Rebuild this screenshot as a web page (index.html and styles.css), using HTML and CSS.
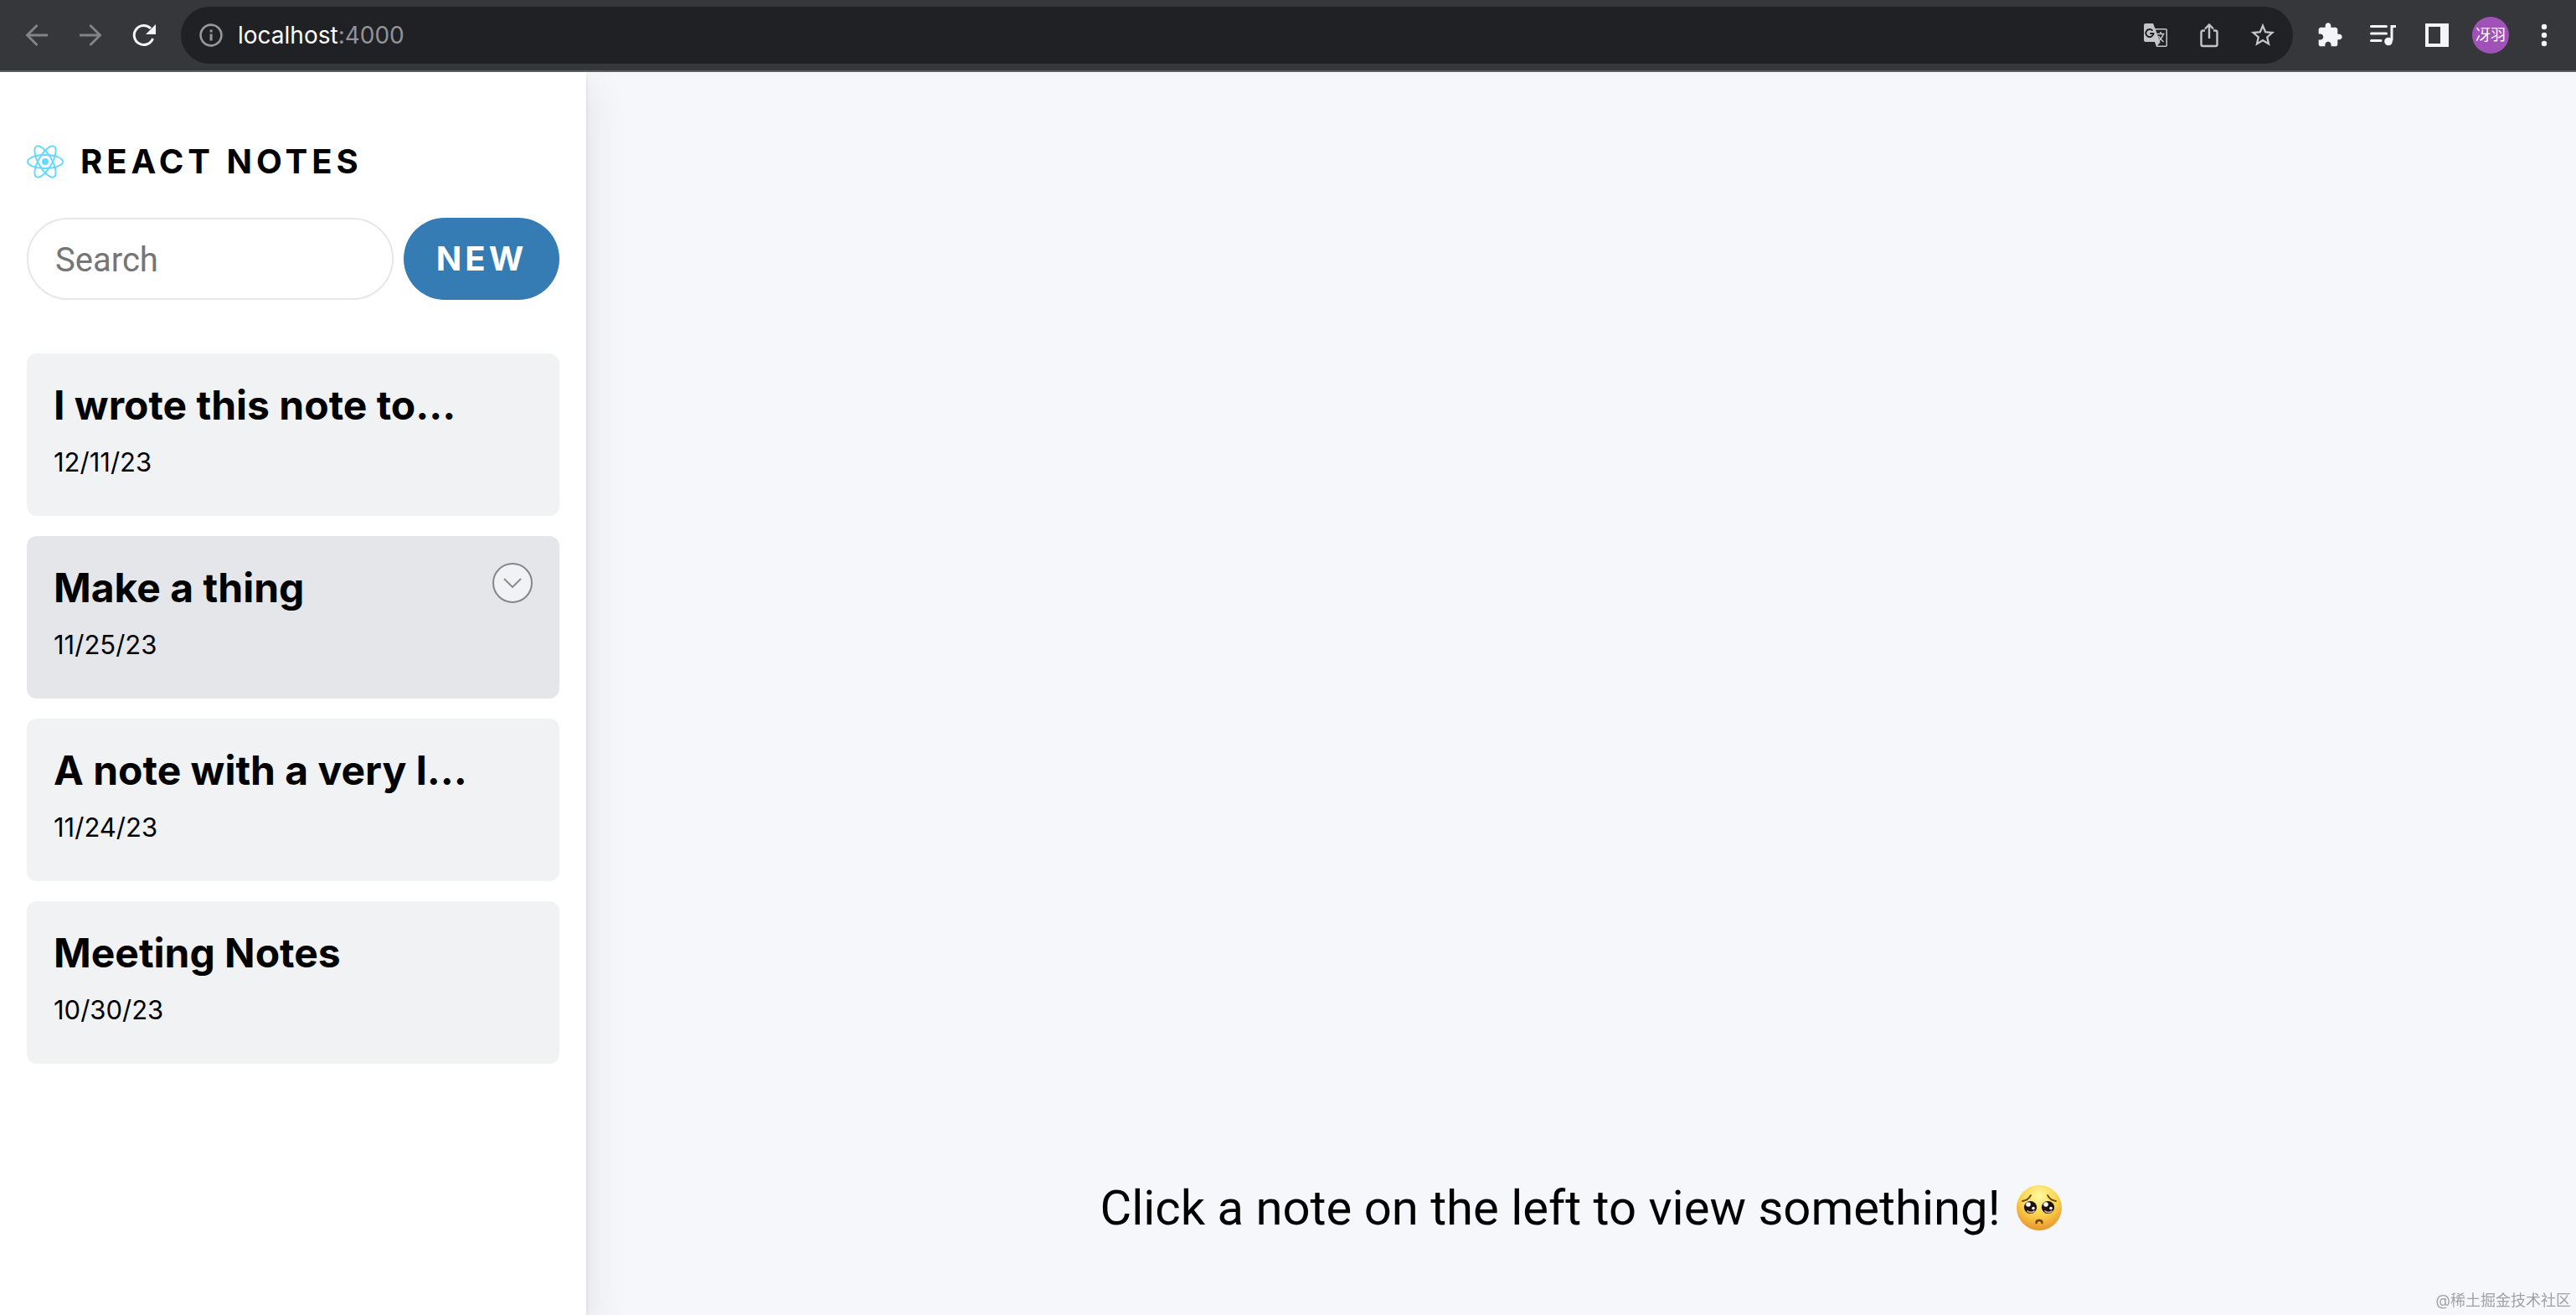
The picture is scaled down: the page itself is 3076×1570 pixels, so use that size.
FILE: index.html
```html
<!DOCTYPE html>
<html lang="en">
<head>
<meta charset="utf-8">
<title>React Notes</title>
<link rel="stylesheet" href="styles.css">
</head>
<body>
<header class="toolbar">
  <nav class="toolbar-group" aria-label="Browser">
    <button class="tool dim" aria-label="Back"><svg width="28" height="28" viewBox="0 0 28 28" fill="none" stroke="currentColor" stroke-width="3"><path d="M27 14H3M14.500 2 2.500 14l12 12"/></svg></button>
    <button class="tool dim" aria-label="Forward"><svg width="28" height="28" viewBox="0 0 28 28" fill="none" stroke="currentColor" stroke-width="3"><path d="M1 14h24M13.500 2l12 12-12 12"/></svg></button>
    <button class="tool bright" aria-label="Reload"><svg width="28" height="28" viewBox="0 0 28 28"><path d="M24.500 18A11.500 11.500 0 1 1 22 6" fill="none" stroke="currentColor" stroke-width="3"/><path d="M28 1v12H16z" fill="currentColor"/></svg></button>
  </nav>
  <div class="address">
    <button class="tool info" aria-label="Site information"><svg width="28" height="28" viewBox="0 0 28 28"><circle cx="14" cy="14" r="12.400" fill="none" stroke="currentColor" stroke-width="2.600"/><path d="M12.600 7.500h3v3h-3zM12.600 12.500h3v8h-3z" fill="currentColor"/></svg></button>
    <p class="url">localhost<span class="port">:4000</span></p>
    <button class="tool soft" aria-label="Translate"><svg width="28" height="28" viewBox="0 0 28 28"><path d="M2 0h9l2.400 6H26a2 2 0 0 1 2 2v18a2 2 0 0 1-2 2H15l-2-6H2a2 2 0 0 1-2-2V2a2 2 0 0 1 2-2z" fill="currentColor"/><path d="M14 7.500h12.500v19H16l3.500-4z" fill="#202124"/><path d="M10.500 8.600A4.600 4.600 0 1 0 11.500 12H7.200" fill="none" stroke="#202124" stroke-width="2"/><path d="M15.500 12.500h9M20 10v2.500M23 13c-1 3.500-3 6-6 8M17.500 15c1.500 3 3.500 5 6 7" fill="none" stroke="currentColor" stroke-width="1.600"/></svg></button>
    <button class="tool soft" aria-label="Share"><svg width="28" height="30" viewBox="0 0 28 30" fill="none" stroke="currentColor" stroke-width="2.400"><path d="M9 9.500H6.500a2 2 0 0 0-2 2V26a2 2 0 0 0 2 2h15a2 2 0 0 0 2-2V11.500a2 2 0 0 0-2-2H19M14 19V3M9 7.500l5-5 5 5"/></svg></button>
    <button class="tool soft" aria-label="Bookmark"><svg width="34" height="34" viewBox="0 0 24 24" fill="currentColor"><path d="M22 9.240l-7.190-.62L12 2 9.190 8.630 2 9.240l5.460 4.730L5.820 21 12 17.270 18.180 21l-1.630-7.030L22 9.240zM12 15.400l-3.760 2.270 1-4.280-3.320-2.880 4.380-.38L12 6.100l1.710 4.040 4.380.38-3.320 2.880 1 4.280L12 15.400z"/></svg></button>
  </div>
  <div class="toolbar-group">
    <button class="tool bright" aria-label="Extensions"><svg width="32" height="32" viewBox="0 0 24 24" fill="currentColor"><path d="M20.500 11H19V7c0-1.100-.9-2-2-2h-4V3.500C13 2.120 11.880 1 10.500 1S8 2.120 8 3.500V5H4c-1.100 0-1.990.9-1.990 2v3.800H3.500c1.490 0 2.700 1.210 2.700 2.700s-1.210 2.700-2.700 2.700H2V20c0 1.100.9 2 2 2h3.800v-1.500c0-1.490 1.210-2.700 2.700-2.700 1.490 0 2.700 1.210 2.700 2.700V22H17c1.100 0 2-.9 2-2v-4h1.500c1.380 0 2.500-1.120 2.500-2.500S21.880 11 20.500 11z"/></svg></button>
    <button class="tool bright" aria-label="Media controls"><svg width="32" height="28" viewBox="0 0 32 28" fill="none" stroke="currentColor" stroke-width="3" stroke-linecap="round"><path d="M1.500 3.500h18M1.500 12h18M1.500 20.500H13"/><path d="M31 3.500h-5v17" stroke-linecap="butt"/><circle cx="22" cy="21.500" r="4.800" fill="currentColor" stroke="none"/></svg></button>
    <button class="tool bright" aria-label="Side panel"><svg width="28" height="28" viewBox="0 0 28 28" fill="currentColor"><path fill-rule="evenodd" d="M0 0h28v28H0zM4 4v20h14V4z"/></svg></button>
    <button class="tool" aria-label="Profile"><span class="avatar">冴羽</span></button>
    <button class="tool bright" aria-label="Menu"><svg width="28" height="28" viewBox="0 0 28 28" fill="currentColor"><circle cx="14" cy="4" r="3.200"/><circle cx="14" cy="14" r="3.200"/><circle cx="14" cy="24" r="3.200"/></svg></button>
  </div>
</header>
<div class="app">
  <aside class="sidebar">
    <h1 class="brand">
      <svg width="44" height="40" viewBox="-11.500 -10.232 23 20.463" aria-hidden="true"><circle r="2.050" fill="#61dafb"/><g fill="none" stroke="#61dafb"><ellipse rx="11" ry="4.200"/><ellipse rx="11" ry="4.200" transform="rotate(60)"/><ellipse rx="11" ry="4.200" transform="rotate(120)"/></g></svg>
      React Notes
    </h1>
    <div class="actions">
      <input class="search" type="search" placeholder="Search" aria-label="Search notes">
      <button class="new">New</button>
    </div>
    <ul class="notes">
      <li class="note"><h2 class="note-title">I wrote this note to...</h2><p class="note-date">12/11/23</p></li>
      <li class="note active"><h2 class="note-title">Make a thing</h2><p class="note-date">11/25/23</p><button class="expand" aria-label="Expand note"><svg width="24" height="14" viewBox="0 0 24 14" fill="none" stroke="currentColor" stroke-width="1.800"><path d="M2 2l10 10L22 2"/></svg></button></li>
      <li class="note"><h2 class="note-title">A note with a very l...</h2><p class="note-date">11/24/23</p></li>
      <li class="note"><h2 class="note-title">Meeting Notes</h2><p class="note-date">10/30/23</p></li>
    </ul>
  </aside>
  <main class="viewer">
    <p class="empty">Click a note on the left to view something!
      <svg class="face" viewBox="0 0 56 56" role="img" aria-label="Pleading face">
        <defs><radialGradient id="skin" cx=".5" cy=".25" r=".75"><stop offset="0" stop-color="#fffaa0"/><stop offset=".55" stop-color="#fbd24b"/><stop offset="1" stop-color="#e9942c"/></radialGradient></defs>
        <circle cx="28" cy="28" r="27" fill="url(#skin)"/>
        <g fill="none" stroke="#6b4210" stroke-width="1.800" stroke-linecap="round"><path d="M8 20q7-1 10-7M48 20q-7-1-10-7"/><path d="M24.500 46q0-3 3.500-3t3.500 3" stroke-width="2.400"/></g>
        <g fill="#1c1210"><circle cx="17.500" cy="27.500" r="7.600"/><circle cx="38.500" cy="27.500" r="7.600"/></g>
        <g fill="#fff"><circle cx="15" cy="24" r="2.800"/><circle cx="36" cy="24" r="2.800"/><circle cx="21" cy="28.500" r="1.800"/><circle cx="42" cy="28.500" r="1.800"/></g>
        <g fill="none" stroke="#c9a9a4" stroke-width="1.800" stroke-linecap="round"><path d="M14 32q4 3 8 0M35 32q4 3 8 0"/></g>
      </svg>
    </p>
  </main>
</div>
<p class="watermark">@稀土掘金技术社区</p>
</body>
</html>
```
FILE: styles.css
```css
* { box-sizing: border-box; }
body {
  margin: 0;
  min-height: 100vh;
  display: flex;
  flex-direction: column;
  background: #f6f7fb;
  color: #000;
  font-family: Inter, "Noto Sans CJK SC", sans-serif;
}
h1, h2, p, ul { margin: 0; padding: 0; }
button, input { font-family: inherit; }
button { border: 0; padding: 0; background: none; cursor: pointer; }

/* Browser toolbar */
.toolbar {
  position: relative;
  z-index: 2;
  display: flex;
  align-items: center;
  gap: 12px;
  height: 86px;
  padding: 0 6px 0 12px;
  background: #36373b;
  border-bottom: 2px solid #5d5d61;
}
.toolbar-group { display: flex; }
.tool {
  display: flex;
  flex: none;
  align-items: center;
  justify-content: center;
  width: 64px;
  height: 64px;
}
.dim { color: #828386; }
.bright { color: #f3f4f8; }
.soft { color: #c4c5c7; }
.info { color: #97989b; }
.address {
  flex: 1;
  display: flex;
  align-items: center;
  height: 68px;
  padding: 0 4px;
  border-radius: 34px;
  background: #202124;
}
.url { flex: 1; color: #fff; font-size: 28px; line-height: 40px; }
.port { color: #929396; }
.avatar {
  width: 44px;
  height: 44px;
  border-radius: 50%;
  background: #a052b8;
  color: #fff;
  font-size: 18px;
  line-height: 44px;
  text-align: center;
}

/* Notes app */
.app { flex: 1; display: flex; }
.sidebar {
  position: relative;
  z-index: 1;
  flex: none;
  width: 700px;
  padding: 83px 32px 32px;
  background: #fff;
  box-shadow: 0 16px 48px rgba(0, 0, 0, .1), 0 4px 4px rgba(0, 0, 0, .1);
}
.brand {
  display: flex;
  align-items: center;
  gap: 20px;
  font-size: 40px;
  line-height: 48px;
  font-weight: 700;
  letter-spacing: 5px;
  text-transform: uppercase;
}
.actions { display: flex; gap: 12px; margin: 43px 0 64px; }
.search {
  flex: 1;
  min-width: 0;
  height: 98px;
  padding: 2px 32px 0;
  border: 2px solid #e6e7e8;
  border-radius: 49px;
  background: #fff;
  font-family: Roboto, sans-serif;
  font-size: 40px;
}
.search::placeholder { color: #757575; }
.new {
  flex: none;
  width: 186px;
  height: 98px;
  padding-bottom: 2px;
  border-radius: 49px;
  background: #357cb5;
  color: #fff;
  font-size: 40px;
  font-weight: 700;
  letter-spacing: 4px;
  text-transform: uppercase;
}
.notes { display: flex; flex-direction: column; gap: 24px; list-style: none; }
.note {
  position: relative;
  padding: 32px 32px 44px;
  border-radius: 12px;
  background: #f1f2f4;
}
.note.active { background: #e5e6ea; }
.note-title { font-size: 48px; line-height: 60px; font-weight: 700; }
.note-date { margin-top: 18px; font-size: 31px; line-height: 40px; }
.expand {
  position: absolute;
  top: 32px;
  right: 32px;
  display: flex;
  align-items: center;
  justify-content: center;
  width: 48px;
  height: 48px;
  border: 2px solid #85868a;
  border-radius: 50%;
  background: #f1f2f3;
  color: #85868a;
}
.viewer {
  flex: 1;
  display: flex;
  align-items: flex-end;
  justify-content: center;
  padding: 32px 32px 88px;
}
.empty {
  display: flex;
  align-items: center;
  gap: 18px;
  font-family: Roboto, sans-serif;
  font-size: 58px;
  line-height: 80px;
}
.face { width: 56px; height: 56px; }
.watermark {
  position: fixed;
  right: 6px;
  bottom: 4px;
  z-index: 3;
  color: #a0a1a5;
  font-size: 18px;
  line-height: 26px;
}
```
